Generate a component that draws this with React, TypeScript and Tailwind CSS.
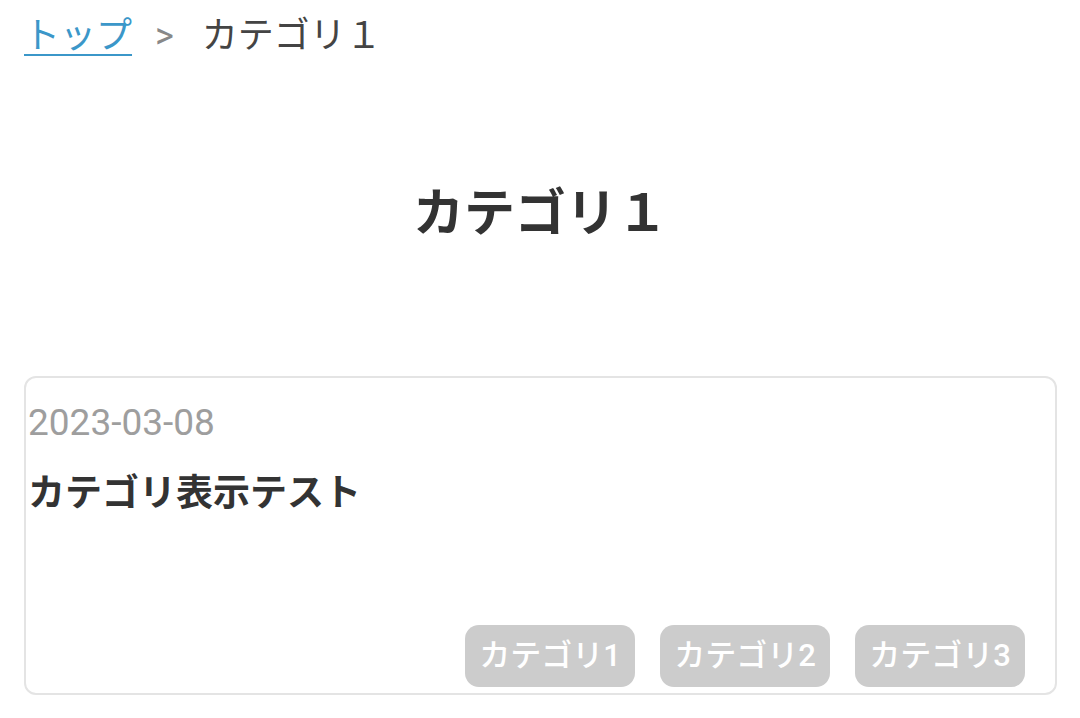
export default function App() {
  const tags = ["カテゴリ1", "カテゴリ2", "カテゴリ3"]

  return (
    <div className="min-h-[718px] bg-white pl-6 pr-[23px] font-['Roboto','Noto_Sans_CJK_JP',sans-serif]">
      {/* Breadcrumb */}
      <nav className="flex items-center pt-[14px] text-[36px] leading-[44px]">
        <a href="#" className="text-[#3b97c9] underline decoration-2 underline-offset-[6px]">
          トップ
        </a>
        <span className="ml-[23px] mr-[28px] text-[#888]">&gt;</span>
        <span className="text-[#444]">カテゴリ１</span>
      </nav>

      {/* Page title */}
      <h1 className="mt-[126px] text-center text-[51px] font-bold leading-[60px] text-[#333]">
        カテゴリ１
      </h1>

      {/* Article card */}
      <div className="mt-[132px] flex h-[319px] flex-col rounded-[12px] border-2 border-[#e4e4e4] pl-[2px] pr-[30px]">
        <p className="mt-[25px] text-[37px] leading-[40px] text-[#9e9e9e]">2023-03-08</p>
        <h2 className="mt-[29px] text-[37px] font-bold leading-[44px] text-[#333]">
          カテゴリ表示テスト
        </h2>
        <div className="mt-auto mb-[6px] flex justify-end gap-[25px]">
          {tags.map((tag) => (
            <span
              key={tag}
              className="flex h-[62px] w-[170px] items-center justify-center rounded-[14px] bg-[#cccccc] text-[31px] font-medium text-white"
            >
              {tag}
            </span>
          ))}
        </div>
      </div>
    </div>
  )
}
